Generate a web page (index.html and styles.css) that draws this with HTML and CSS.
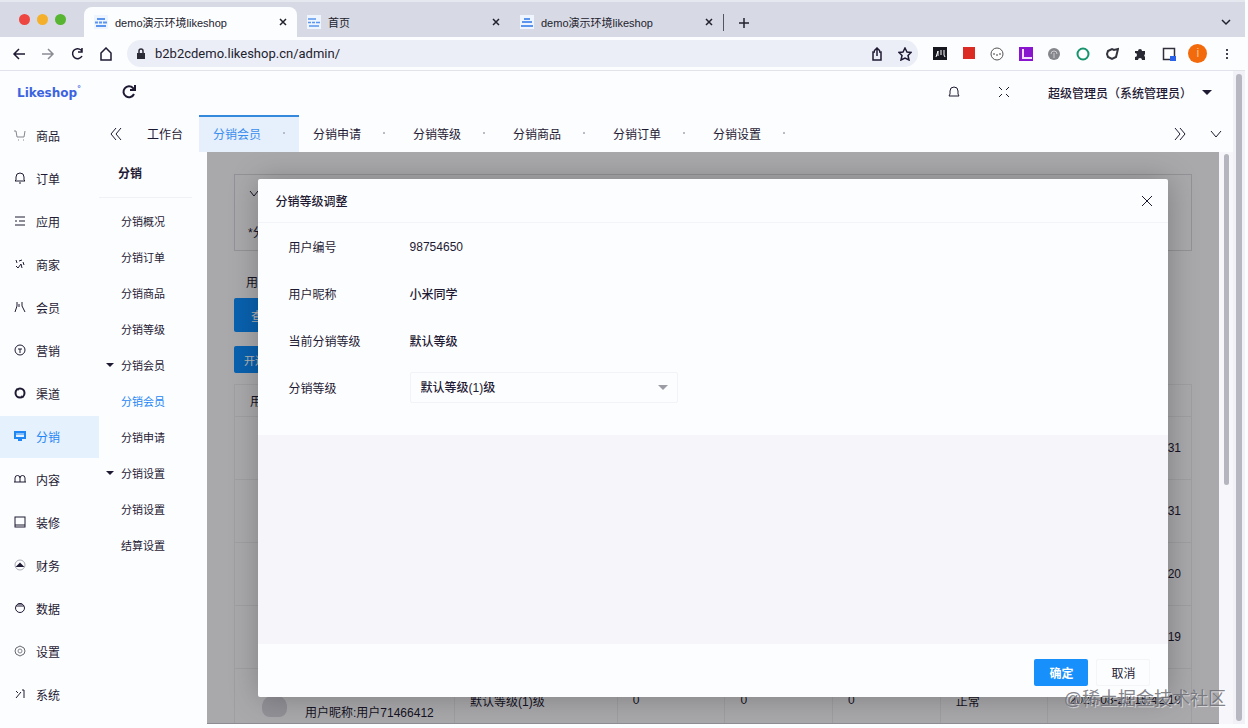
FILE: index.html
```html
<!DOCTYPE html>
<html lang="zh-CN">

<head>
  <meta charset="UTF-8">
  <meta name="viewport" content="width=device-width, initial-scale=1.0">
  <title>分销会员</title>
  <link rel="stylesheet" href="styles.css">
</head>

<body>
  <div class="browser">
    <!-- browser tabs -->
    <div class="tab-strip">
      <div class="lights"><i class="red"></i><i class="yellow"></i><i class="green"></i></div>
      <div class="browser-tab current">
        <svg class="favicon" viewBox="0 0 14 14"><rect width="14" height="14" fill="#eef5ff"/><path d="M3 4h8M1 7.500h3m1 0h3m1 0h4M2 11h10" stroke="#5b95ee" stroke-width="2"/></svg>
        <span>demo演示环境likeshop</span>
        <button aria-label="关闭标签"><svg viewBox="0 0 10 10"><path d="M2 2l6 6M8 2l-6 6"/></svg></button>
      </div>
      <div class="browser-tab">
        <svg class="favicon" viewBox="0 0 14 14"><rect width="14" height="14" fill="#eef5ff"/><path d="M1 4h8M1 7.500h3m1 0h3m1 0h4M2 11h10" stroke="#5b95ee" stroke-width="1.500"/></svg>
        <span>首页</span>
        <button aria-label="关闭标签"><svg viewBox="0 0 10 10"><path d="M2 2l6 6M8 2l-6 6"/></svg></button>
      </div>
      <div class="browser-tab">
        <svg class="favicon" viewBox="0 0 14 14"><rect width="14" height="14" fill="#eef5ff"/><path d="M4 4h6M2 7h10M1 11h12" stroke="#5b95ee" stroke-width="2"/></svg>
        <span>demo演示环境likeshop</span>
        <button aria-label="关闭标签"><svg viewBox="0 0 10 10"><path d="M2 2l6 6M8 2l-6 6"/></svg></button>
      </div>
      <button class="new-tab" aria-label="新标签"><svg viewBox="0 0 12 12"><path d="M6 1v10M1 6h10"/></svg></button>
      <button class="tab-search" aria-label="搜索标签"><svg viewBox="0 0 10 10"><path d="M1 3l4 4 4-4"/></svg></button>
    </div>

    <!-- address bar -->
    <div class="toolbar">
      <div class="nav-buttons">
        <button aria-label="后退"><svg viewBox="0 0 14 14"><path d="M13 7H2M7 2L2 7l5 5"/></svg></button>
        <button aria-label="前进" class="dim"><svg viewBox="0 0 14 14"><path d="M1 7h11M7 2l5 5-5 5"/></svg></button>
        <button aria-label="刷新"><svg viewBox="0 0 14 14"><path d="M12 9a5 5 0 1 1-1-6l1 1M12 1v4H8"/></svg></button>
        <button aria-label="主页"><svg viewBox="0 0 14 14"><path d="M2 6l5-5 5 5v7H2z"/></svg></button>
      </div>
      <div class="address">
        <svg class="lock" viewBox="0 0 10 12"><path d="M3 6V3a2 2 0 0 1 4 0v3" fill="none" stroke="#2b2b38" stroke-width="1.500"/><rect x="1" y="5" width="8" height="6" fill="#2b2b38"/></svg>
        <input type="text" aria-label="地址" value="b2b2cdemo.likeshop.cn/admin/">
        <button aria-label="分享"><svg viewBox="0 0 14 14"><path d="M5 5H3v8h8V5H9M7 9V1M4 4l3-3 3 3"/></svg></button>
        <button aria-label="收藏"><svg viewBox="0 0 14 14"><path d="M7 1l2 4 4 .500-3 3 1 4.500-4-2-4 2 1-4.500-3-3L5 5z"/></svg></button>
      </div>
      <div class="extensions">
        <svg viewBox="0 0 14 14"><rect width="14" height="13" fill="#17171f"/><path d="M3 10l2-6v5M8 3v5M11 3v5l1 2" stroke="#fff" fill="none"/></svg>
        <svg viewBox="0 0 14 14"><rect x="1" y="0" width="12" height="12" fill="#dc2b22"/></svg>
        <svg viewBox="0 0 14 14"><circle cx="7" cy="7" r="6" fill="#fff" stroke="#555"/><path d="M4 6v2M10 6v2M6 8h2" stroke="#444"/></svg>
        <svg viewBox="0 0 14 14"><rect width="14" height="14" fill="#8a15cf"/><path d="M4 2v9h9" stroke="#f2dcff" stroke-width="2" fill="none"/></svg>
        <svg viewBox="0 0 14 14"><circle cx="7" cy="7" r="6" fill="#85858c"/><path d="M4 7a3 3 0 0 1 6 0M7 6v5" stroke="#ccc" fill="none"/></svg>
        <svg viewBox="0 0 14 14"><circle cx="7" cy="7" r="5.500" fill="#fff" stroke="#17936d" stroke-width="2"/></svg>
        <svg viewBox="0 0 14 14"><path d="M3 4l4-2 2 1 4-1-1 4-1 4-4 2-4-2-1-3z" stroke="#33333d" stroke-width="2" fill="#fff"/></svg>
        <svg viewBox="0 0 14 14"><path d="M2 4h3a2 2 0 1 1 4 0h3v3a2 2 0 0 0 0 3v3H9a2 2 0 0 0-4 0H2v-3a2 2 0 0 0 0-4z" fill="#292934"/></svg>
        <svg viewBox="0 0 14 14"><rect x="1.500" y="1.500" width="11" height="11" fill="#fff" stroke="#30303c" stroke-width="1.500"/><path d="M8 9h6v5H8z" fill="#2c62e8"/></svg>
        <span class="profile">i</span>
        <svg viewBox="0 0 14 14"><path d="M6 2h2v2H6zM6 6h2v2H6zM6 10h2v2H6z" fill="#444450"/></svg>
      </div>
    </div>

    <div class="page">
      <aside class="sidebar">
        <div class="logo">Likeshop<sup>°</sup></div>
        <nav class="menu">
          <a href="#"><svg viewBox="0 0 12 12"><path d="M0 2h2l1 6h7l1-6M4 11h1M9 11h1" stroke="#85858f"/></svg>商品</a>
          <a href="#"><svg viewBox="0 0 12 12"><path d="M1 9l1-1V5a4 4 0 0 1 8 0v3l1 1zM5 11h2"/></svg>订单</a>
          <a href="#"><svg viewBox="0 0 12 12"><path d="M1 2h10M1 6h2m2 0h6M1 10h10"/></svg>应用</a>
          <a href="#"><svg viewBox="0 0 12 12"><path d="M2 2l1 3M5 3l3-1M9 4l1 3M2 8l2 2 3-4 1 4"/></svg>商家</a>
          <a href="#"><svg viewBox="0 0 12 12"><path d="M3 1v4l-2 6M8 1v4l3 6M5 3v3"/></svg>会员</a>
          <a href="#"><svg viewBox="0 0 12 12"><circle cx="6" cy="6" r="5"/><path d="M4 5h4M6 5v4"/></svg>营销</a>
          <a href="#"><svg viewBox="0 0 12 12"><circle cx="6" cy="6" r="4.500" stroke-width="2"/><path d="M2 2l3 1M10 10L7 9"/></svg>渠道</a>
          <a href="#" class="active"><svg viewBox="0 0 12 12"><path d="M1 2h10v6H1zM4 10h4" stroke-width="2"/><path d="M2 4h8"/></svg>分销</a>
          <a href="#"><svg viewBox="0 0 12 12"><path d="M1 9V5a2 2 0 0 1 5 0v4M6 5a2 2 0 0 1 5 0v4M0 9h12"/></svg>内容</a>
          <a href="#"><svg viewBox="0 0 12 12"><rect x="1" y="1" width="10" height="10"/><path d="M1 9h10"/></svg>装修</a>
          <a href="#"><svg viewBox="0 0 12 12"><circle cx="6" cy="6" r="5" stroke="#aaaab4"/><path d="M4 7l2-2 2 2z" stroke-width="2"/></svg>财务</a>
          <a href="#"><svg viewBox="0 0 12 12"><circle cx="6" cy="6" r="4.500"/><path d="M2 4h8M4 2h4"/></svg>数据</a>
          <a href="#"><svg viewBox="0 0 12 12"><path d="M6 1l4 2 1 3-1 3-4 2-4-2-1-3 1-3z" stroke="#66666f"/><circle cx="6" cy="6" r="2" stroke="#85858f"/></svg>设置</a>
          <a href="#"><svg viewBox="0 0 12 12"><path d="M2 3l2 2M2 10l5-6M8 2h2v8"/></svg>系统</a>
        </nav>
      </aside>

      <div class="main">
        <header class="header">
          <button aria-label="刷新页面"><svg class="big" viewBox="0 0 14 14"><path d="M12 9a5.500 5.500 0 1 1-1-6l1 1M13 0v5H8" stroke-width="2"/></svg></button>
          <div class="header-right">
            <button aria-label="消息"><svg viewBox="0 0 12 12"><path d="M1 10l1-2V5a4 4 0 0 1 8 0v3l1 2z"/></svg></button>
            <button aria-label="全屏"><svg viewBox="0 0 12 12"><path d="M1 1l3 3M11 1L8 4M1 11l3-3M11 11L8 8"/></svg></button>
            <button class="user">超级管理员（系统管理员）<i class="caret"></i></button>
          </div>
        </header>

        <div class="page-tabs">
          <button class="arrow" aria-label="向左"><svg viewBox="0 0 12 12"><path d="M6 0L1 6l5 6M11 0L6 6l5 6"/></svg></button>
          <a href="#" class="home">工作台</a>
          <a href="#" class="active">分销会员<i></i></a>
          <a href="#">分销申请<i></i></a>
          <a href="#">分销等级<i></i></a>
          <a href="#">分销商品<i></i></a>
          <a href="#">分销订单<i></i></a>
          <a href="#">分销设置<i></i></a>
          <div class="arrows-right">
            <button class="arrow" aria-label="向右"><svg viewBox="0 0 12 12"><path d="M1 0l5 6-5 6M6 0l5 6-5 6"/></svg></button>
            <button class="arrow" aria-label="更多"><svg viewBox="0 0 12 12"><path d="M1 3l5 6 5-6"/></svg></button>
          </div>
        </div>

        <div class="body">
          <nav class="submenu">
            <h2>分销</h2>
            <a href="#">分销概况</a>
            <a href="#">分销订单</a>
            <a href="#">分销商品</a>
            <a href="#">分销等级</a>
            <a href="#" class="group">分销会员</a>
            <a href="#" class="active">分销会员</a>
            <a href="#">分销申请</a>
            <a href="#" class="group">分销设置</a>
            <a href="#">分销设置</a>
            <a href="#">结算设置</a>
          </nav>

          <div class="content">
            <div class="tips">
              <svg viewBox="0 0 12 12"><path d="M2 3l4 5 4-5"/></svg>
              <p>*分销会员列表</p>
            </div>
            <div class="filter-label">用户信息</div>
            <button class="btn search">查询</button>
            <button class="btn add">开通分销</button>
            <table class="list">
              <thead>
                <tr>
                  <th class="col-user">用户信息</th>
                  <th class="col-level">分销等级</th>
                  <th>下级人数</th>
                  <th>一级</th>
                  <th>二级</th>
                  <th>状态</th>
                  <th class="col-time">成为时间</th>
                </tr>
              </thead>
              <tbody>
                <tr><td></td><td></td><td></td><td></td><td></td><td></td><td>2020-08-25 10:21:31</td></tr>
                <tr><td></td><td></td><td></td><td></td><td></td><td></td><td>2020-08-25 10:20:31</td></tr>
                <tr><td></td><td></td><td></td><td></td><td></td><td></td><td>2020-08-24 17:08:20</td></tr>
                <tr><td></td><td></td><td></td><td></td><td></td><td></td><td>2020-08-24 15:36:19</td></tr>
                <tr>
                  <td><div class="member"><i class="avatar"></i><p>用户昵称:用户71466412</p></div></td>
                  <td>默认等级(1)级</td>
                  <td>0</td>
                  <td>0</td>
                  <td>0</td>
                  <td>正常</td>
                  <td>2020-08-23 16:42:19</td>
                </tr>
              </tbody>
            </table>

            <div class="mask">
              <form class="dialog" role="dialog" aria-labelledby="dialog-title">
                <div class="dialog-head">
                  <h3 id="dialog-title">分销等级调整</h3>
                  <button type="button" aria-label="关闭"><svg viewBox="0 0 12 12"><path d="M1 1l10 10M11 1L1 11"/></svg></button>
                </div>
                <div class="dialog-body">
                  <div class="fields">
                    <div class="field"><span>用户编号</span><b>98754650</b></div>
                    <div class="field"><span>用户昵称</span><b>小米同学</b></div>
                    <div class="field"><span>当前分销等级</span><b>默认等级</b></div>
                    <div class="field">
                      <label for="level">分销等级</label>
                      <div class="select">
                        <select id="level">
                          <option>默认等级(1)级</option>
                        </select>
                        <i class="caret"></i>
                      </div>
                    </div>
                  </div>
                </div>
                <div class="dialog-foot">
                  <button type="button" class="confirm">确定</button>
                  <button type="button" class="cancel">取消</button>
                </div>
              </form>
            </div>
          </div>

          <div class="inner-scroll"><i></i></div>
        </div>
      </div>

      <div class="outer-scroll"><i></i></div>
    </div>
  </div>
  <div class="watermark">@稀土掘金技术社区</div>
</body>

</html>
```
FILE: styles.css
```css
* {
  margin: 0;
  padding: 0;
  box-sizing: border-box;
}

body {
  font-family: "Liberation Sans", "Noto Sans CJK SC", sans-serif;
  font-size: 12px;
  color: #1f1a33;
  background: #fcfdff;
}

a {
  color: inherit;
  text-decoration: none;
}

button {
  border: none;
  background: none;
  font: inherit;
  color: inherit;
}

svg {
  display: block;
  width: 12px;
  height: 12px;
}

button svg,
.menu svg,
.tips svg {
  fill: none;
  stroke: currentColor;
}

.caret {
  border: 5px solid transparent;
  border-top-color: currentColor;
  border-bottom: none;
}

.browser {
  display: flex;
  flex-direction: column;
  height: 100vh;
  overflow: hidden;
  padding: 0 3px 4px 0;
}

/* tab strip */
.tab-strip {
  display: flex;
  align-items: flex-end;
  height: 37px;
  background: #d7dae4;
  border-top: 2px solid #e6e8ef;
  color: #22222e;
}

.lights {
  display: flex;
  align-items: center;
  gap: 7px;
  width: 84px;
  height: 35px;
  padding-left: 19px;
}

.lights i {
  width: 11px;
  height: 11px;
  border-radius: 50%;
}

.lights .red { background: #ee4640; }
.lights .yellow { background: #f4b02a; }
.lights .green { background: #57b531; }

.browser-tab {
  display: flex;
  align-items: center;
  width: 213px;
  height: 30px;
  padding: 0 9px 0 10px;
  font-size: 11px;
}

.browser-tab.current {
  background: #fcfdff;
  border-radius: 8px 8px 0 0;
}

.browser-tab .favicon {
  width: 14px;
  height: 14px;
  margin-right: 7px;
}

.browser-tab span {
  flex: 1;
}

.browser-tab button svg {
  width: 10px;
  height: 10px;
  stroke-width: 1.5;
}

.new-tab {
  height: 17px;
  margin: 0 0 6px;
  padding: 0 14px;
  border-left: 1px solid #55555f;
}

.new-tab svg {
  stroke-width: 1.5;
}

.tab-search {
  margin: 0 14px 10px auto;
}

.tab-search svg {
  width: 10px;
  height: 10px;
  stroke-width: 1.5;
}

/* toolbar */
.toolbar {
  display: flex;
  align-items: center;
  height: 34px;
  border-bottom: 1px solid #e2e3ea;
}

.nav-buttons {
  display: flex;
  gap: 15px;
  width: 127px;
  padding-left: 12px;
}

.toolbar button svg {
  width: 14px;
  height: 14px;
  stroke-width: 1.5;
}

.nav-buttons .dim {
  color: #8b8b96;
}

.address {
  display: flex;
  align-items: center;
  gap: 14px;
  flex: 1;
  height: 27px;
  padding: 0 6px 0 9px;
  border-radius: 14px;
  background: #eceef7;
}

.address .lock {
  width: 10px;
  height: 12px;
}

.address input {
  flex: 1;
  margin-left: -5px;
  border: none;
  outline: none;
  background: none;
  font-family: Roboto, sans-serif;
  font-size: 13px;
  color: #22222e;
}

.extensions {
  display: flex;
  align-items: center;
  justify-content: space-between;
  width: 305px;
  margin: 0 9px 0 13px;
}

.extensions svg {
  width: 14px;
  height: 14px;
  margin: 0 2px;
}

.profile {
  width: 19px;
  height: 19px;
  border-radius: 50%;
  background: #f26a0c;
  color: #ffc48c;
  line-height: 19px;
  text-align: center;
}

/* admin page */
.page {
  display: flex;
  flex: 1;
  min-height: 0;
}

.sidebar {
  width: 99px;
}

.logo {
  height: 44px;
  padding-left: 17px;
  font-family: "DejaVu Sans", sans-serif;
  font-size: 12px;
  font-weight: bold;
  line-height: 44px;
  color: #3d64e0;
}

.logo sup {
  font-size: 8px;
  line-height: 8px;
}

.menu {
  display: flex;
  flex-direction: column;
  gap: 1px;
}

.menu a {
  display: flex;
  align-items: center;
  gap: 10px;
  height: 42px;
  padding: 0 0 2px 14px;
}

.menu .active {
  background: #e6f1fe;
  color: #1e86f5;
}

.main {
  display: flex;
  flex-direction: column;
  flex: 1;
  min-width: 0;
}

.header {
  display: flex;
  align-items: center;
  justify-content: space-between;
  height: 44px;
  padding: 0 21px 2px 23px;
}

.header .big {
  width: 14px;
  height: 14px;
}

.header-right {
  display: flex;
  align-items: center;
  gap: 38px;
}

.header .user {
  display: flex;
  align-items: center;
  gap: 10px;
  font-weight: 500;
}

.page-tabs {
  display: flex;
  height: 37px;
}

.page-tabs .arrow {
  padding: 0 11px;
}

.page-tabs a {
  display: flex;
  align-items: center;
  justify-content: space-between;
  width: 100px;
  padding: 0 14px 3px;
  border-top: 2px solid transparent;
}

.page-tabs a i {
  width: 2px;
  height: 2px;
  background: #b9bcc8;
}

.page-tabs .home {
  width: 66px;
}

.page-tabs .active {
  background: #e6f0fd;
  border-top-color: #3489dd;
  color: #3a8eee;
}

.arrows-right {
  display: flex;
  gap: 2px;
  margin-left: auto;
}

.body {
  display: flex;
  flex: 1;
  min-height: 0;
}

.submenu {
  width: 108px;
  font-size: 11px;
}

.submenu h2 {
  height: 46px;
  margin-right: 15px;
  margin-bottom: 5px;
  padding-left: 19px;
  border-bottom: 1px solid #f0f1f6;
  font-size: 12px;
  line-height: 44px;
}

.submenu a {
  display: flex;
  align-items: center;
  height: 36px;
  padding-left: 22px;
}

.submenu .group {
  gap: 7px;
  padding-left: 7px;
}

.submenu .group::before {
  content: "";
  border: 4px solid transparent;
  border-top-color: #1f1a33;
  border-bottom: none;
}

.submenu .active {
  color: #1e86f5;
}

.content {
  position: relative;
  flex: 1;
  padding: 22px 27px 0;
  overflow: hidden;
  background: #f3f3f7;
  border-bottom: 1px solid #8c8c92;
}

.tips {
  height: 77px;
  padding: 13px;
  border: 1px solid #d2d2d8;
}

.tips p {
  margin-top: 23px;
}

.filter-label {
  height: 47px;
  padding: 22px 12px 0;
}

.btn {
  display: block;
  border-radius: 2px;
  background: #0d8bfa;
  color: #fff;
}

.btn.search {
  height: 34px;
  padding: 0 17px;
}

.btn.add {
  height: 27px;
  margin: 14px 0 11px;
  padding: 0 10px;
  font-size: 11px;
}

.list {
  width: 100%;
  border-collapse: collapse;
  table-layout: fixed;
}

.list th,
.list td {
  height: 63px;
  padding: 0 15px;
  border: 1px solid #e4e4e9;
  font-weight: normal;
  text-align: left;
  white-space: nowrap;
}

.list th {
  height: 32px;
}

.list td:last-child {
  padding: 0 10px;
  text-align: right;
}

.list .col-user { width: 23%; }
.list .col-level { width: 17%; }
.list .col-time { width: 15%; }

.member {
  display: flex;
  align-items: center;
  gap: 18px;
  padding: 22px 0 0 12px;
}

.member .avatar {
  width: 25px;
  height: 22px;
  margin-bottom: 10px;
  border-radius: 12px 12px 8px 8px;
  background: #d0d0d8;
}

/* dialog */
.mask {
  position: absolute;
  inset: 0;
  padding: 27px 5% 26px;
  background: rgba(0, 0, 0, 0.3);
}

.dialog {
  display: flex;
  flex-direction: column;
  height: 100%;
  background: #fcfdff;
  border-radius: 2px;
  box-shadow: 1px 1px 30px rgba(0, 0, 0, 0.25);
}

.dialog-head {
  display: flex;
  align-items: center;
  justify-content: space-between;
  height: 44px;
  padding: 0 15px 0 18px;
  border-bottom: 1px solid #f3f4f9;
}

.dialog-head h3 {
  font-size: 12px;
  font-weight: 500;
}

.dialog-body {
  flex: 1;
  background: #f5f5fa;
}

.fields {
  padding-bottom: 24px;
  background: #fcfdff;
}

.field {
  display: flex;
  align-items: center;
  height: 47px;
  padding-left: 31px;
}

.field > span,
.field > label {
  width: 121px;
}

.field b {
  font-weight: 500;
}

.select {
  position: relative;
  width: 268px;
}

.select select {
  appearance: none;
  width: 100%;
  height: 31px;
  padding: 0 10px;
  border: 1px solid #f2f3f8;
  border-radius: 2px;
  background: #fcfdff;
  font: inherit;
  font-weight: 500;
  color: inherit;
}

.select .caret {
  position: absolute;
  top: 13px;
  right: 10px;
  color: #9c9ca6;
}

.dialog-foot {
  display: flex;
  justify-content: flex-end;
  gap: 8px;
  padding: 15px 18px 11px;
}

.dialog-foot button {
  width: 54px;
  height: 27px;
  border-radius: 2px;
}

.dialog-foot .confirm {
  background: #1890fb;
  color: #fff;
  font-weight: bold;
}

.dialog-foot .cancel {
  border: 1px solid #f4f4f9;
}

/* scrollbars */
.inner-scroll {
  width: 14px;
  padding: 2px 0 0 5px;
  background: #f7f7fb;
}

.inner-scroll i {
  display: block;
  width: 5px;
  height: 58%;
  border-radius: 3px;
  background: #b4b5be;
}

.outer-scroll {
  width: 12px;
  padding: 3px 3px;
  background: #f1f1f7;
}

.outer-scroll i {
  display: block;
  height: 100%;
  border-radius: 3px;
  background: #b6b7c1;
}

.watermark {
  position: absolute;
  right: 22px;
  bottom: 18px;
  font-size: 18px;
  color: rgba(110, 110, 118, 0.85);
  text-shadow: 1px 1px 0 rgba(255, 255, 255, 0.5);
}
```
